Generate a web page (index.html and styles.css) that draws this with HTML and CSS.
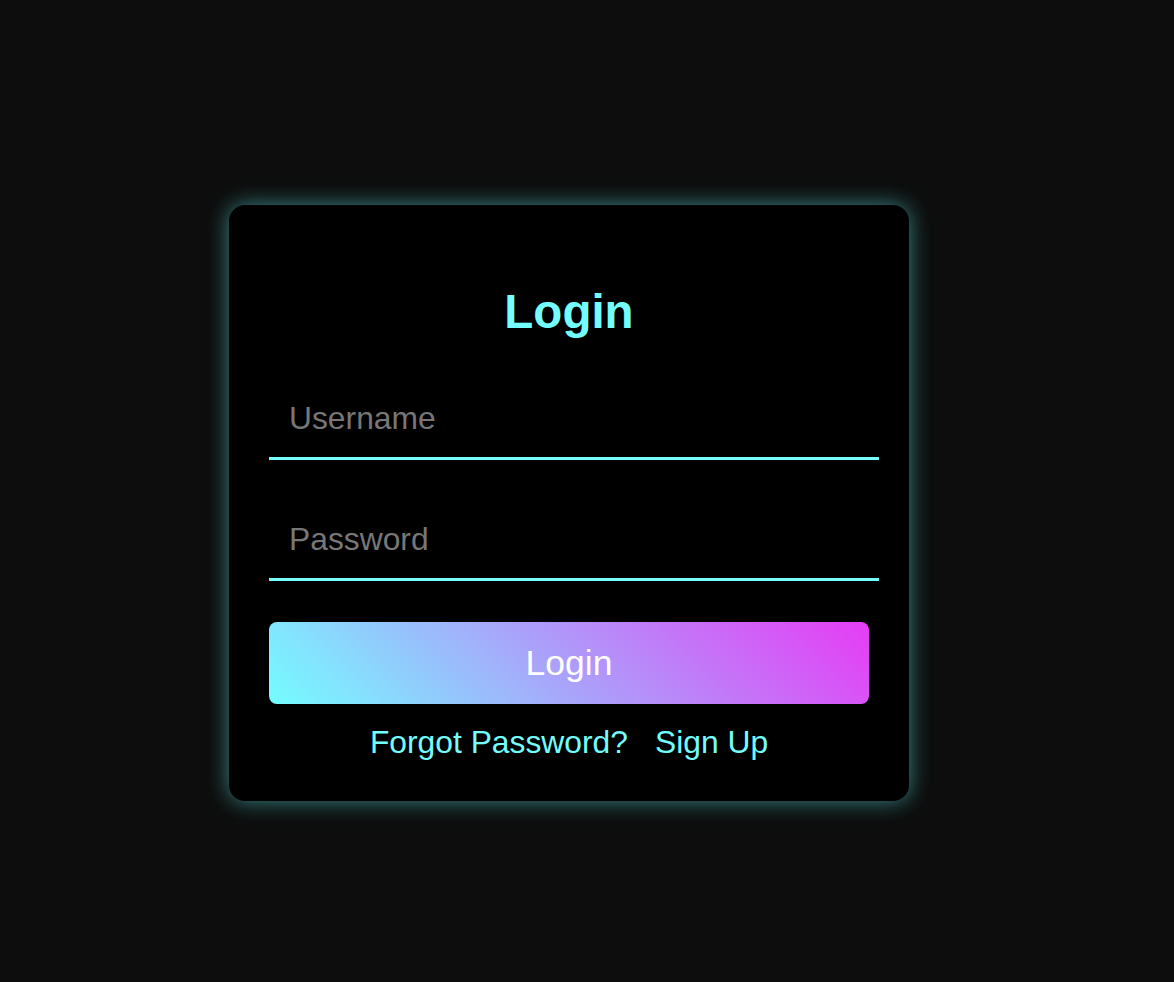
FILE: index.html
```html
<!DOCTYPE html>
<html lang="en">
<head>
<meta charset="utf-8">
<title>Login</title>
<link rel="stylesheet" href="styles.css">
</head>
<body>
  <div class="card">
    <h2 class="title">Login</h2>
    <form class="form">
      <input class="field" type="text" placeholder="Username">
      <input class="field" type="password" placeholder="Password">
      <button class="btn" type="button">Login</button>
    </form>
    <div class="links">
      <a class="link" href="#">Forgot Password?</a>
      <a class="link" href="#">Sign Up</a>
    </div>
  </div>
</body>
</html>
```

FILE: styles.css
```css
* { box-sizing: border-box; }
html, body { margin: 0; height: 100%; }
body {
  background: #0d0d0d;
  font-family: "Liberation Sans", Arial, sans-serif;
  display: flex;
  align-items: flex-start;
  padding: 205px 0 0 229px;
}
.card {
  width: 680px;
  background: #000;
  border-radius: 16px;
  padding: 40px 40px 41px;
  box-shadow: 0 0 22px rgba(102, 255, 255, 0.5);
}
.title {
  margin: 40px 0 40px;
  text-align: center;
  color: #74fdff;
  font-size: 47.5px;
  font-weight: bold;
  line-height: 54px;
}
.form {
  display: flex;
  flex-direction: column;
  gap: 40px;
}
.field {
  width: calc(100% + 10px);
  background: transparent;
  border: none;
  border-bottom: 3px solid #74fdff;
  outline: none;
  color: #fff;
  font-family: inherit;
  font-size: 31.8px;
  line-height: 36px;
  padding: 21px 20px 21px;
}
.field::placeholder { color: #777; }
.btn {
  margin-top: 1px;
  height: 82px;
  border: none;
  border-radius: 8px;
  background: linear-gradient(45deg, #74fdff, #e63cf5);
  color: #fff;
  font-family: inherit;
  font-size: 35.5px;
  cursor: pointer;
}
.links {
  margin-top: 20px;
  display: flex;
  justify-content: center;
  gap: 27px;
  line-height: 36px;
}
.link {
  color: #74fdff;
  text-decoration: none;
  font-size: 31.8px;
}
```
